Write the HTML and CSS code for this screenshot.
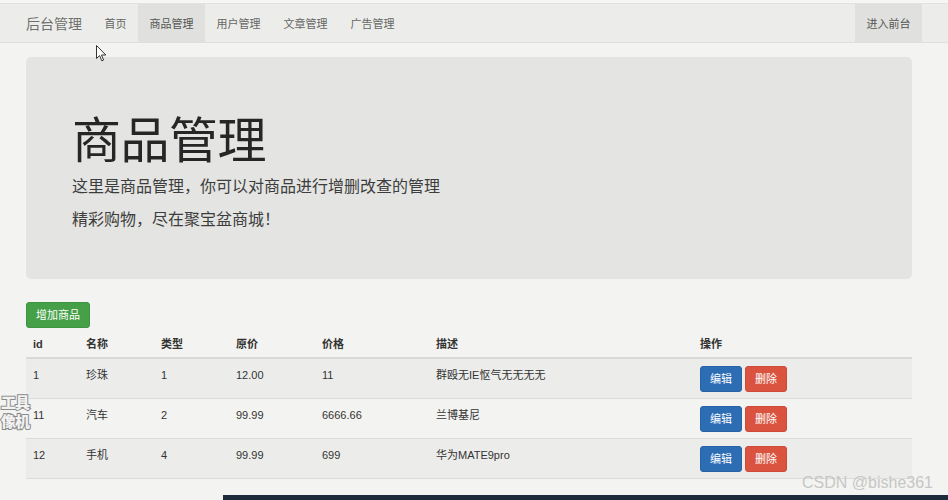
FILE: index.html
```html
<!DOCTYPE html>
<html lang="zh-CN">
<head>
<meta charset="utf-8">
<title>商品管理</title>
<link rel="stylesheet" href="styles.css">
</head>
<body>
<div class="topstrip"></div>
<nav class="navbar">
  <div class="nav-left">
    <span class="brand">后台管理</span>
    <a class="nav-item">首页</a>
    <a class="nav-item active">商品管理</a>
    <a class="nav-item">用户管理</a>
    <a class="nav-item">文章管理</a>
    <a class="nav-item">广告管理</a>
  </div>
  <div class="nav-right">
    <a class="nav-item active">进入前台</a>
  </div>
</nav>

<main class="container">
  <section class="jumbotron">
    <h1>商品管理</h1>
    <p>这里是商品管理，你可以对商品进行增删改查的管理</p>
    <p>精彩购物，尽在聚宝盆商城！</p>
  </section>

  <div class="toolbar">
    <button class="btn btn-success">增加商品</button>
  </div>

  <table class="table">
    <colgroup>
      <col class="c-id"><col class="c-name"><col class="c-type"><col class="c-orig"><col class="c-price"><col class="c-desc"><col class="c-op">
    </colgroup>
    <thead>
      <tr><th>id</th><th>名称</th><th>类型</th><th>原价</th><th>价格</th><th>描述</th><th>操作</th></tr>
    </thead>
    <tbody>
      <tr class="odd"><td>1</td><td>珍珠</td><td>1</td><td>12.00</td><td>11</td><td>群殴无IE怄气无无无无</td><td class="ops"><button class="btn btn-primary">编辑</button><button class="btn btn-danger">删除</button></td></tr>
      <tr><td>11</td><td>汽车</td><td>2</td><td>99.99</td><td>6666.66</td><td>兰博基尼</td><td class="ops"><button class="btn btn-primary">编辑</button><button class="btn btn-danger">删除</button></td></tr>
      <tr class="odd"><td>12</td><td>手机</td><td>4</td><td>99.99</td><td>699</td><td>华为MATE9pro</td><td class="ops"><button class="btn btn-primary">编辑</button><button class="btn btn-danger">删除</button></td></tr>
    </tbody>
  </table>
</main>

<div class="taskbar"></div>

<div class="sticker"><span>工具</span><span>像机</span></div>
<div class="watermark">CSDN @bishe361</div>
<svg class="cursor" width="11" height="17" viewBox="0 0 11 17"><path d="M0.5 0.5 L0.5 13.5 L3.6 10.6 L5.8 15.8 L7.6 15 L5.5 10 L9.8 10 Z" fill="#fff" stroke="#333" stroke-width="1"/></svg>
</body>
</html>
```

FILE: styles.css
```css
* { box-sizing: border-box; }

html, body {
  margin: 0;
  padding: 0;
}

body {
  width: 948px;
  height: 500px;
  overflow: hidden;
  position: relative;
  background: #f3f4f1;
  font-family: "Liberation Sans", "Noto Sans CJK SC", sans-serif;
  color: #333;
  font-size: 11px;
}

.topstrip {
  height: 4px;
  background: #f6f6f4;
  border-bottom: 1px solid #e2e3e0;
}

.navbar {
  height: 39px;
  background: #ecedea;
  border-bottom: 1px solid #dfe0dd;
  display: flex;
  justify-content: space-between;
  padding: 0 26px;
}

.nav-left, .nav-right {
  display: flex;
  align-items: stretch;
}

.brand {
  display: flex;
  align-items: center;
  font-size: 14px;
  color: #6f706e;
  padding-right: 11px;
}

.nav-item {
  display: flex;
  align-items: center;
  padding: 0 11.5px;
  font-size: 11px;
  color: #666;
  text-decoration: none;
}

.nav-item.active {
  background: #e0e1de;
  color: #555;
}

.container {
  padding: 14px 36px 0 26px;
}

.jumbotron {
  background: #e4e5e2;
  border-radius: 5px;
  padding: 55px 46px 0;
  height: 222px;
}

.jumbotron h1 {
  margin: 0 0 5px;
  font-size: 49px;
  font-weight: 400;
  line-height: 59px;
  color: #262626;
  letter-spacing: -0.5px;
}

.jumbotron p {
  margin: 0 0 11px;
  font-size: 16px;
  line-height: 22px;
  color: #3d3d3d;
}

.toolbar {
  padding-top: 23px;
}

.btn {
  display: inline-block;
  vertical-align: top;
  border: 1px solid transparent;
  border-radius: 3px;
  font-family: "Liberation Sans", "Noto Sans CJK SC", sans-serif;
  font-size: 11px;
  color: #fff;
  height: 26px;
  line-height: 24px;
  padding: 0;
  cursor: pointer;
}

.btn-success {
  width: 64px;
  background: #45a047;
  border-color: #3e9440;
}

.btn-primary {
  width: 42px;
  background: #2c6db4;
  border-color: #2862a4;
}

.btn-danger {
  width: 42px;
  margin-left: 3px;
  background: #d9533f;
  border-color: #cc4a37;
}

.table {
  width: 886px;
  margin-top: 3px;
  border-collapse: collapse;
  table-layout: fixed;
}

.c-id { width: 53px; }
.c-name { width: 75px; }
.c-type { width: 75px; }
.c-orig { width: 86px; }
.c-price { width: 114px; }
.c-desc { width: 264px; }
.c-op { width: 219px; }

.table th {
  text-align: left;
  font-weight: 700;
  font-size: 11px;
  line-height: 18px;
  padding: 4px 7px 4px;
  color: #333;
  border-bottom: 2px solid #d9dad7;
}

.table td {
  font-size: 11px;
  line-height: 18px;
  padding: 7px 7px 6px;
  vertical-align: top;
  border-top: 1px solid #dcddda;
  height: 40px;
  color: #333;
}

.table tbody tr:last-child td {
  border-bottom: 1px solid #dcddda;
}

.table tr.odd td {
  background: #ecedea;
}

.table td.ops {
  white-space: nowrap;
  font-size: 0;
  line-height: 0;
}

.taskbar {
  position: absolute;
  left: 223px;
  right: 0;
  top: 495px;
  height: 5px;
  background: #1d2b3c;
}

.sticker {
  position: absolute;
  left: 1px;
  top: 393px;
  display: flex;
  flex-direction: column;
  line-height: 19px;
  font-size: 15px;
  font-weight: 900;
  color: #f2f2f2;
  -webkit-text-stroke: 2px #8a8a8a;
  paint-order: stroke fill;
  letter-spacing: -1px;
}

.watermark {
  position: absolute;
  left: 802px;
  top: 474px;
  font-size: 16px;
  color: #c6c7c4;
  white-space: nowrap;
}

.cursor {
  position: absolute;
  left: 96px;
  top: 45px;
}
```
